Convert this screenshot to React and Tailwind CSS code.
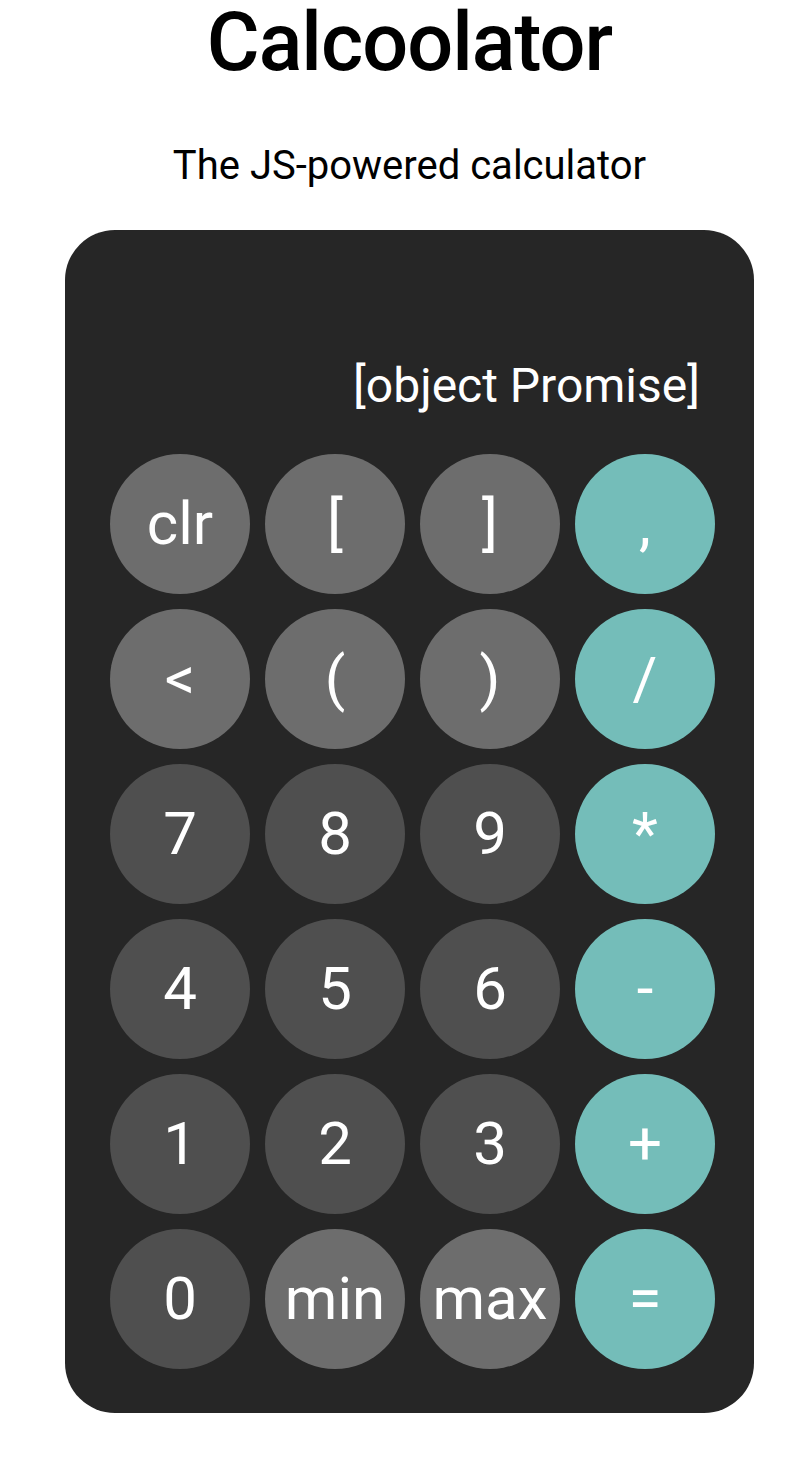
import React from "react";

// tipi di tasto: light = funzioni, dark = cifre, op = operatori
const KEYS = [
  ["clr", "light"], ["[", "light"], ["]", "light"], [",", "op"],
  ["<", "light"], ["(", "light"], [")", "light"], ["/", "op"],
  ["7", "dark"], ["8", "dark"], ["9", "dark"], ["*", "op"],
  ["4", "dark"], ["5", "dark"], ["6", "dark"], ["-", "op"],
  ["1", "dark"], ["2", "dark"], ["3", "dark"], ["+", "op"],
  ["0", "dark"], ["min", "light"], ["max", "light"], ["=", "op"],
];

const keyColor = {
  light: "bg-[#6d6d6d]",
  dark: "bg-[#4f4f4f]",
  op: "bg-[#74bdb9]",
};

function Key({ label, kind }) {
  return (
    <button
      className={`flex h-[140px] w-[140px] items-center justify-center rounded-full text-[60px] leading-none text-white ${keyColor[kind]}`}
    >
      {label}
    </button>
  );
}

export default function App() {
  return (
    <div
      className="min-h-screen bg-white pl-[24px] text-black"
      style={{ fontFamily: "Roboto, 'Liberation Sans', sans-serif" }}
    >
      <div className="flex flex-col items-center">
        <h1 className="text-[81px] font-medium leading-[86px] tracking-[-1px]">Calcoolator</h1>
        <p className="mt-[60px] text-[40px] leading-none">The JS-powered calculator</p>

        <div className="mt-[44px] w-[689px] rounded-[50px] bg-[#262626] pb-[44px] pl-[45px] pr-[39px] pt-[128px]">
          <div className="mb-[40px] pr-[15px] text-right text-[48px] leading-[56px] text-white">
            [object Promise]
          </div>
          <div className="grid grid-cols-[repeat(4,140px)] gap-[15px]">
            {KEYS.map(([label, kind]) => (
              <Key key={label} label={label} kind={kind} />
            ))}
          </div>
        </div>
      </div>
    </div>
  );
}
